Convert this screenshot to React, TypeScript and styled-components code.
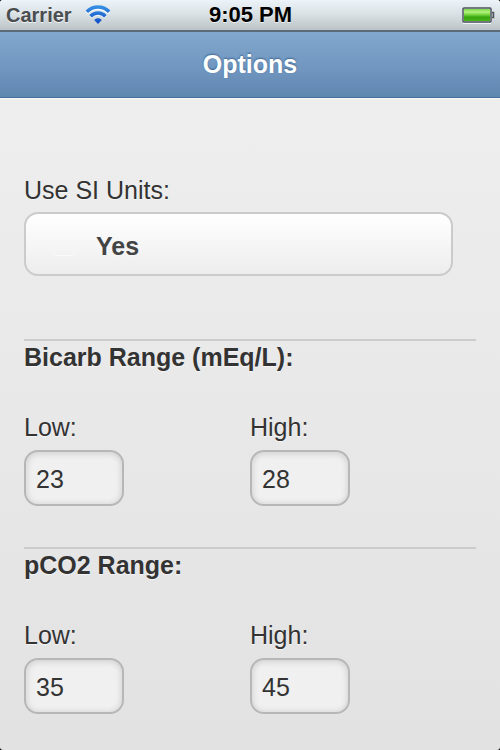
import React, { useState } from "react";
import styled, { createGlobalStyle } from "styled-components";

const GlobalStyle = createGlobalStyle`
  *, *::before, *::after { box-sizing: border-box; }
  html { min-height: 100%; background: #000; }
  body { margin: 0; }
  body, input { font-family: "Liberation Sans", Arial, Helvetica, sans-serif; }
`;

const Page = styled.div`
  min-height: 100vh;
  border-radius: 3px;
  overflow: hidden;
  color: #333;
  font-size: 25px;
  line-height: 30px;
  background: linear-gradient(#eeeeee 98px, #e2e2e2);
`;

const StatusBar = styled.div`
  display: grid;
  grid-template-columns: 1fr auto 1fr;
  align-items: center;
  height: 32px;
  padding: 0 5px 0 6px;
  border-bottom: 2px solid #5d6b78;
  background: linear-gradient(#edf4f9, #d9e0e4 50%, #bcc3c6);
  text-shadow: 0 1px 0 rgba(255, 255, 255, 0.7);
`;

const Carrier = styled.div`
  display: flex;
  align-items: center;
  gap: 13px;
  color: #4a4d50;
  font-size: 20px;
  font-weight: bold;
`;

const Clock = styled.time`
  color: #000;
  font-size: 22px;
  font-weight: bold;
`;

const BatterySlot = styled.div`
  display: flex;
  justify-content: flex-end;
`;

const Header = styled.header`
  display: flex;
  align-items: center;
  justify-content: center;
  height: 66px;
  padding-bottom: 2px;
  border-bottom: 1px solid #456f9a;
  background: linear-gradient(#81a8ce, #7095bf 60%, #5e87b0);
  box-shadow: 0 1px 0 #f8f8f8;
`;

const Title = styled.h1`
  margin: 0;
  color: #fff;
  font-size: 25px;
  line-height: 30px;
  text-shadow: 0 -1px 2px #3e6790;
`;

const Options = styled.form`
  padding: 77px 24px 36px;
  text-shadow: 0 1px 1px #f6f6f6;
`;

const Units = styled.fieldset`
  min-width: 0;
  margin: 0 0 63px;
  padding: 0;
  border: 0;
`;

const Legend = styled.legend`
  padding: 0;
  margin-bottom: 7px;
`;

const ToggleRow = styled.label`
  display: flex;
  align-items: center;
  gap: 18px;
  width: 95%;
  height: 64px;
  padding: 3px 24px 0;
  border: 2px solid #cbcbcb;
  border-radius: 14px;
  background: linear-gradient(#ffffff, #ededed);
  color: #444;
  font-weight: bold;
  cursor: pointer;
`;

const Checkbox = styled.input`
  appearance: none;
  width: 28px;
  height: 20px;
  margin: 0;
  border-radius: 8px;
  border-bottom: 1px solid #fafafa;
`;

const RangeSection = styled.section`
  padding-top: 1px;
  border-top: 2px solid #cccccc;

  & + & {
    margin-top: 41px;
  }
`;

const SectionTitle = styled.h2`
  margin: 0 0 40px;
  font-size: 25px;
  line-height: 30px;
`;

const Fields = styled.div`
  display: grid;
  grid-template-columns: 1fr 1fr;
`;

const Field = styled.div`
  display: flex;
  flex-direction: column;
  align-items: flex-start;
  gap: 8px;
`;

const NumberInput = styled.input`
  width: 100px;
  height: 56px;
  padding: 2px 10px 0;
  border: 2px solid #b7b7b7;
  border-radius: 14px;
  background: #f0f0f0;
  box-shadow: inset 0 1px 7px rgba(0, 0, 0, 0.16);
  color: #333;
  font-size: 25px;
  text-shadow: none;
`;

function WifiIcon() {
  return (
    <svg width="26" height="20" viewBox="0 0 26 20" aria-hidden="true">
      <defs>
        <linearGradient id="wifi" x1="0" y1="0" x2="0" y2="20" gradientUnits="userSpaceOnUse">
          <stop offset="0" stopColor="#3a94e6" />
          <stop offset="1" stopColor="#0b47c4" />
        </linearGradient>
      </defs>
      <g fill="none" stroke="#fff" strokeOpacity="0.75" strokeWidth="3" transform="translate(0 1)">
        <path d="M1.8 7.2C8 .8 18 .8 24.2 7.2M5.600 11.300c4.200-4.200 10.600-4.200 14.800 0" />
      </g>
      <g fill="none" stroke="url(#wifi)" strokeWidth="3.400">
        <path d="M1.800 6.800C8 .4 18 .4 24.200 6.800" />
        <path d="M5.600 11.200c4.200-4.200 10.600-4.200 14.800 0" />
        <path d="M9.200 15c2-2.400 5.600-2.400 7.600 0L13 19z" fill="url(#wifi)" stroke="none" />
      </g>
    </svg>
  );
}

function BatteryIcon() {
  return (
    <svg width="33" height="18" viewBox="0 0 33 18" aria-hidden="true">
      <defs>
        <linearGradient id="charge" x1="0" y1="0" x2="0" y2="1">
          <stop offset="0" stopColor="#79d84b" />
          <stop offset="0.25" stopColor="#b4f37c" />
          <stop offset="0.5" stopColor="#6fd03a" />
          <stop offset="0.68" stopColor="#36a50c" />
          <stop offset="1" stopColor="#4bb31b" />
        </linearGradient>
      </defs>
      <path d="M1 17.500h28" stroke="#fff" strokeOpacity="0.8" />
      <rect x="1" y="2" width="28" height="14" rx="1" fill="#dfe8dc" stroke="#50565e" strokeWidth="1.500" />
      <rect x="2" y="3" width="26" height="12" fill="url(#charge)" />
      <path d="M30 6.500h1.500v5H30" fill="#b9bec3" stroke="#50565e" strokeWidth="1.500" />
    </svg>
  );
}

type RangeProps = { id: string; title: string; low: string; high: string };

function Range({ id, title, low, high }: RangeProps) {
  return (
    <RangeSection aria-labelledby={`${id}-title`}>
      <SectionTitle id={`${id}-title`}>{title}</SectionTitle>
      <Fields>
        <Field>
          <label htmlFor={`${id}-low`}>Low:</label>
          <NumberInput id={`${id}-low`} type="text" inputMode="numeric" defaultValue={low} />
        </Field>
        <Field>
          <label htmlFor={`${id}-high`}>High:</label>
          <NumberInput id={`${id}-high`} type="text" inputMode="numeric" defaultValue={high} />
        </Field>
      </Fields>
    </RangeSection>
  );
}

export default function App() {
  const [useSI, setUseSI] = useState(false);

  return (
    <>
      <GlobalStyle />
      <Page>
        <StatusBar>
          <Carrier>
            Carrier
            <WifiIcon />
          </Carrier>
          <Clock>9:05 PM</Clock>
          <BatterySlot>
            <BatteryIcon />
          </BatterySlot>
        </StatusBar>
        <Header>
          <Title>Options</Title>
        </Header>
        <Options>
          <Units>
            <Legend>Use SI Units:</Legend>
            <ToggleRow htmlFor="si-units">
              <Checkbox
                id="si-units"
                type="checkbox"
                checked={useSI}
                onChange={(event) => setUseSI(event.target.checked)}
              />
              Yes
            </ToggleRow>
          </Units>
          <Range id="bicarb" title="Bicarb Range (mEq/L):" low="23" high="28" />
          <Range id="pco2" title="pCO2 Range:" low="35" high="45" />
        </Options>
      </Page>
    </>
  );
}
